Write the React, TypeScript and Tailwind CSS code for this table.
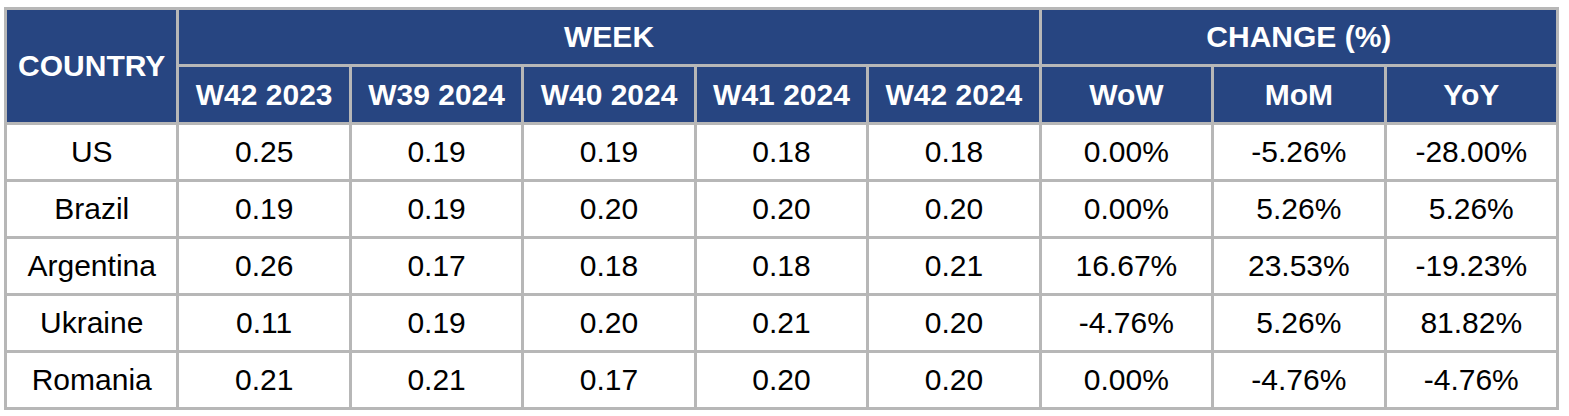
import React from "react";

const weeks = ["W42 2023", "W39 2024", "W40 2024", "W41 2024", "W42 2024"];
const changes = ["WoW", "MoM", "YoY"];
const rows: string[][] = [
  ["US", "0.25", "0.19", "0.19", "0.18", "0.18", "0.00%", "-5.26%", "-28.00%"],
  ["Brazil", "0.19", "0.19", "0.20", "0.20", "0.20", "0.00%", "5.26%", "5.26%"],
  ["Argentina", "0.26", "0.17", "0.18", "0.18", "0.21", "16.67%", "23.53%", "-19.23%"],
  ["Ukraine", "0.11", "0.19", "0.20", "0.21", "0.20", "-4.76%", "5.26%", "81.82%"],
  ["Romania", "0.21", "0.21", "0.17", "0.20", "0.20", "0.00%", "-4.76%", "-4.76%"],
];

export default function App() {
  const head = "bg-[#274581] text-white font-bold flex items-center justify-center";
  return (
    <div
      className="bg-white w-[1569px] h-[416px] pl-[4px] pt-[7px]"
      style={{ fontFamily: '"Liberation Sans", Arial, sans-serif' }}
    >
      <div className="grid w-[1555px] grid-cols-9 grid-rows-[54px_55px_54px_54px_54px_54px_54px] gap-[3px] bg-[#b7b7b7] p-[3px] text-[30px] leading-none">
        <div className={`${head} row-span-2`}>COUNTRY</div>
        <div className={`${head} col-span-5`}>WEEK</div>
        <div className={`${head} col-span-3`}>CHANGE (%)</div>
        {weeks.map((w) => (
          <div key={w} className={head}>
            {w}
          </div>
        ))}
        {changes.map((c) => (
          <div key={c} className={head}>
            {c}
          </div>
        ))}
        {rows.map((r) =>
          r.map((v, i) => (
            <div
              key={r[0] + i}
              className="bg-white text-black flex items-center justify-center"
            >
              {v}
            </div>
          ))
        )}
      </div>
    </div>
  );
}
